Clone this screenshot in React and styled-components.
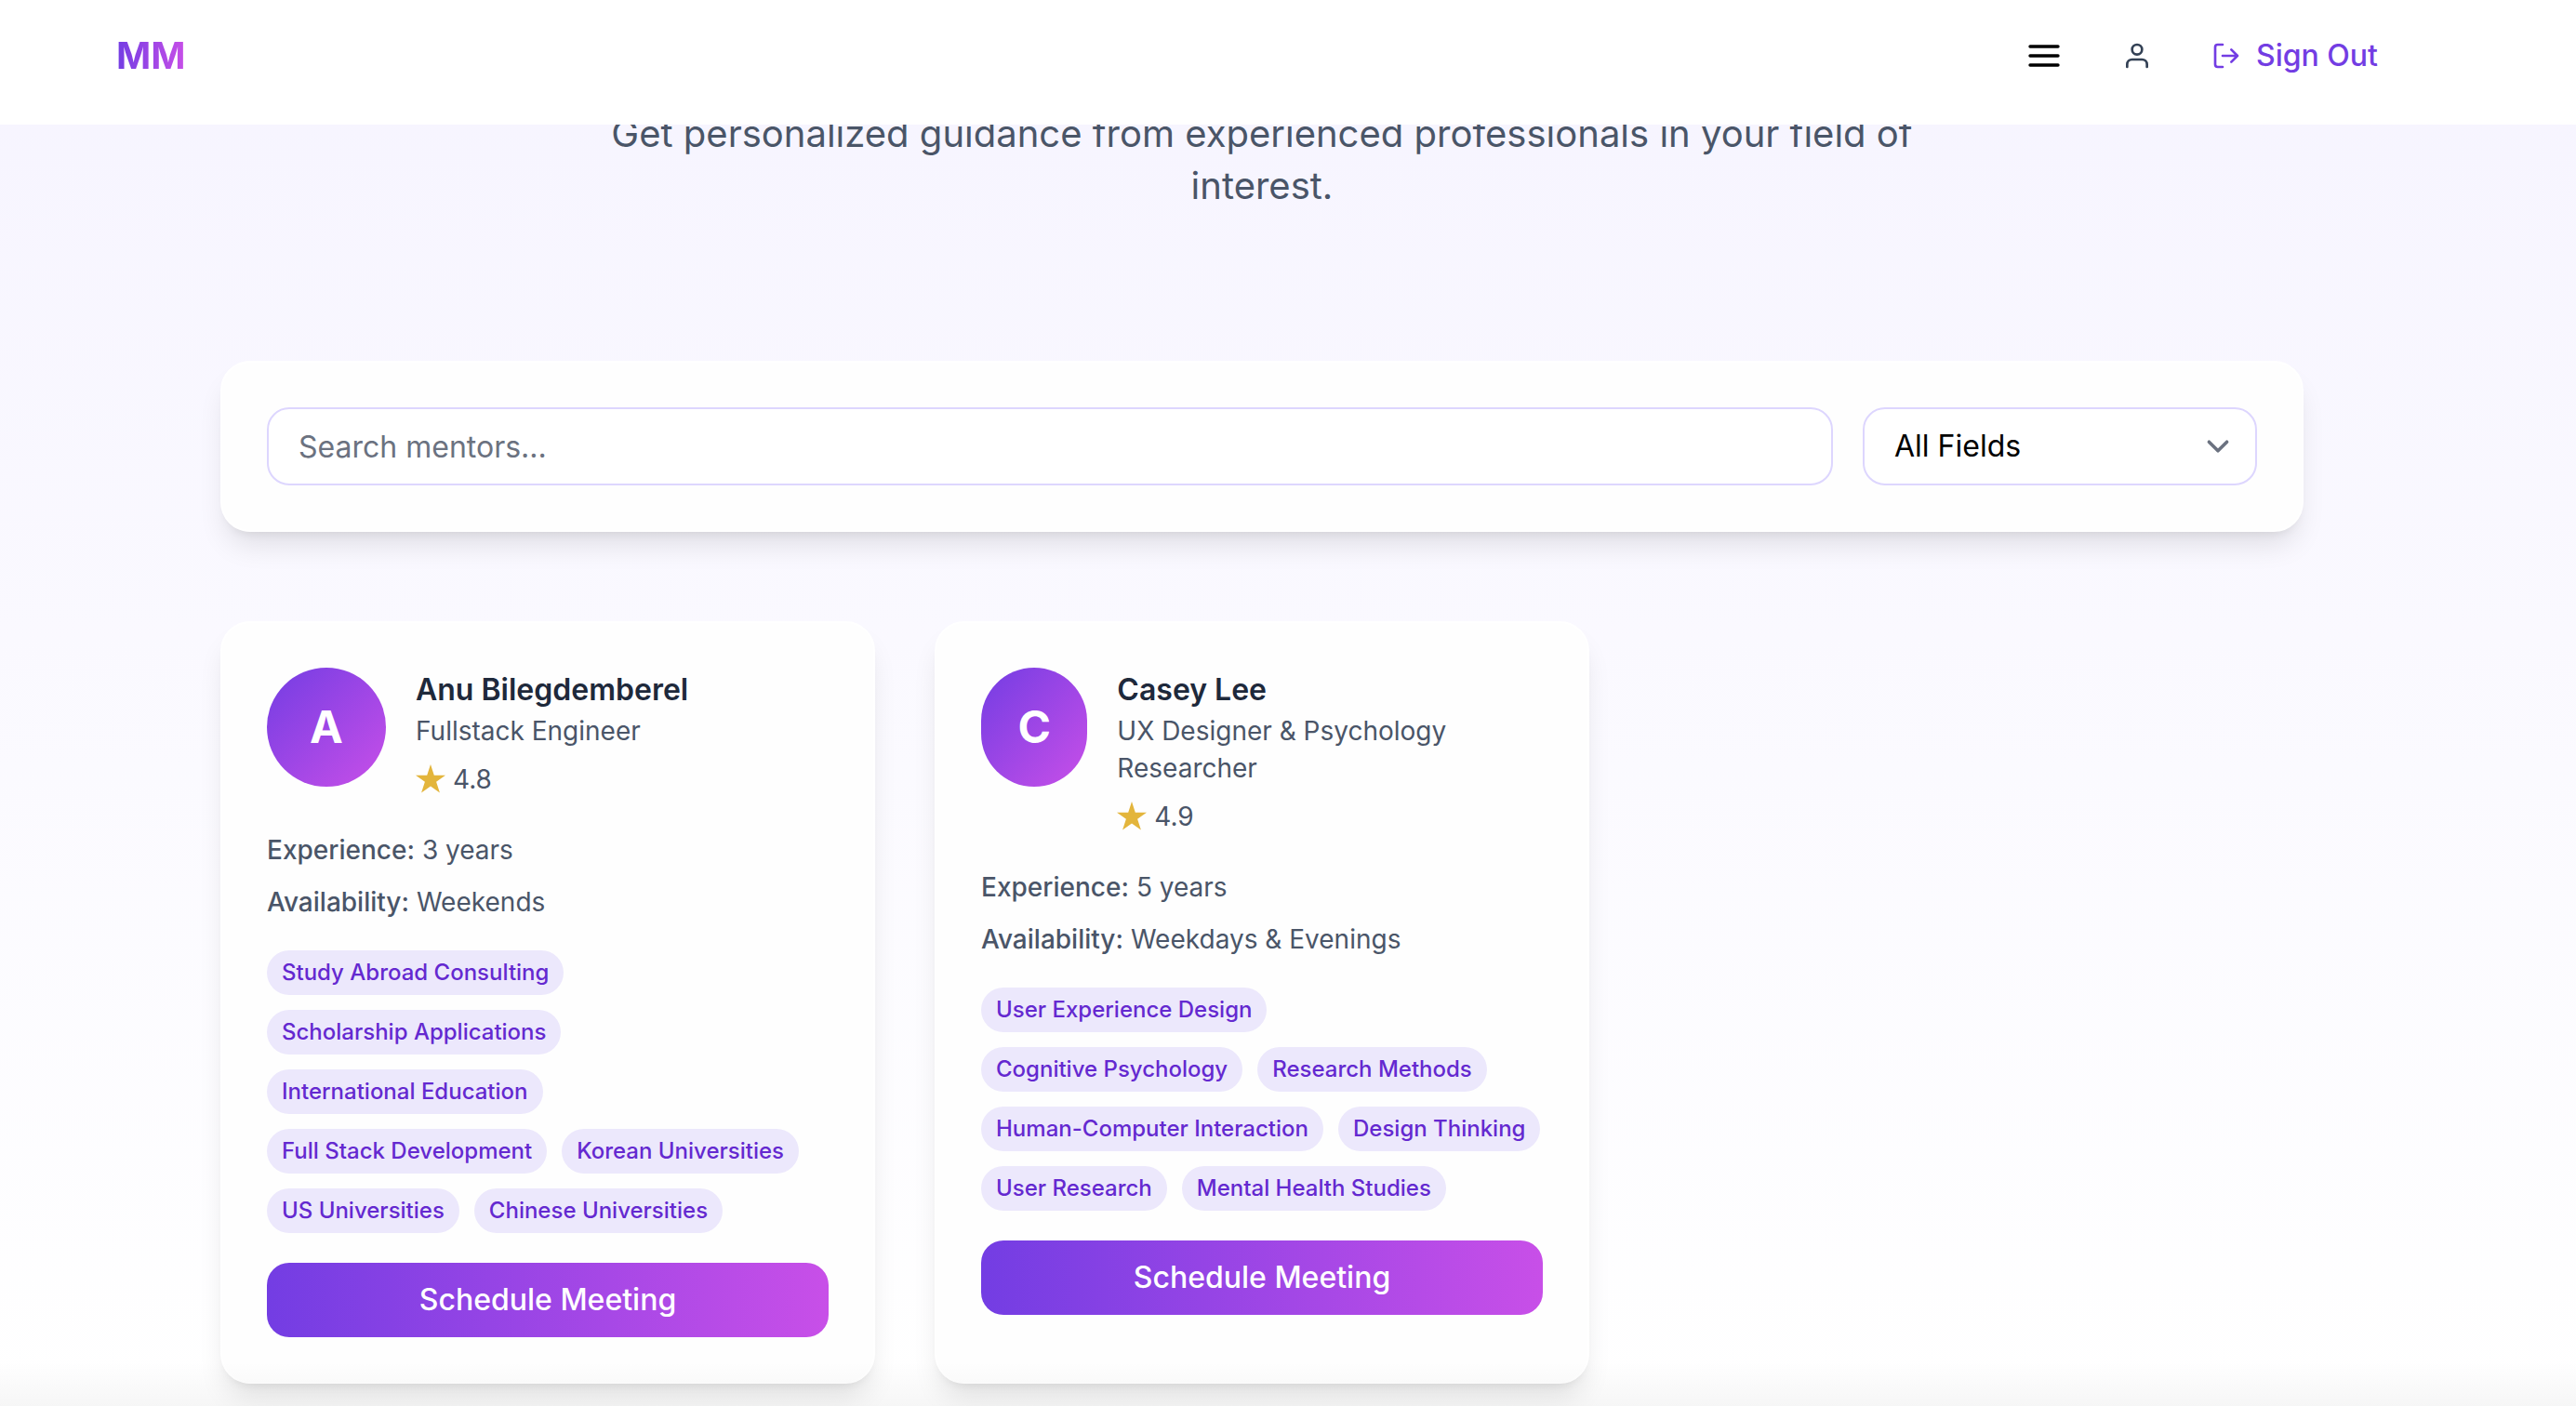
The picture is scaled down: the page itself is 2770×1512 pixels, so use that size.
import React from "react";
import styled, { createGlobalStyle } from "styled-components";

const GlobalStyle = createGlobalStyle`
  *, *::before, *::after { box-sizing: border-box; }
  html { height: 100%; overflow: hidden; }
  body {
    margin: 0;
    height: 100%;
    overflow: hidden;
    font-family: Inter, "Liberation Sans", sans-serif;
    font-size: 32px;
    line-height: 48px;
    color: #4a5568;
    background: #ffffff;
  }
  #root { height: 100%; }
  h3, p, ul, dl, dd { margin: 0; padding: 0; }
  button, input, select { font: inherit; }
`;

const brand = "#733de3, #c84fe8";

const Page = styled.div`
  position: relative;
  display: flex;
  flex-direction: column;
  height: 100%;
  overflow: hidden;
  background: linear-gradient(to bottom, #f6f4ff, #ffffff);

  /* soft shade rising from the lower edge of the window */
  &::after {
    content: "";
    position: absolute;
    inset: auto 0 0;
    height: 48px;
    background: linear-gradient(to bottom, rgba(0, 0, 0, 0), rgba(0, 0, 0, 0.035));
    pointer-events: none;
  }
`;

const Header = styled.header`
  flex: none;
  padding-right: 56px;
  background: #ffffff;
`;

const Nav = styled.nav`
  display: flex;
  align-items: center;
  justify-content: space-between;
  max-width: 2560px;
  height: 134px;
  margin: 0 auto;
  padding: 0 48px 14px;
`;

const Logo = styled.a`
  font-size: 40px;
  font-weight: 700;
  line-height: 56px;
  text-decoration: none;
  color: transparent;
  background: linear-gradient(to right, ${brand});
  background-clip: text;
  -webkit-background-clip: text;
`;

const NavActions = styled.div`
  display: flex;
  align-items: center;
  gap: 32px;
`;

const IconButton = styled.button`
  display: flex;
  padding: 16px;
  border: 0;
  background: none;
  color: ${(p) => p.$color};
`;

const SignOut = styled.button`
  display: flex;
  align-items: center;
  gap: 16px;
  padding: 16px 32px 16px 16px;
  border: 0;
  background: none;
  font-weight: 500;
  color: #733de3;
`;

const Main = styled.main`
  flex: 1;
  min-height: 0;
  overflow: hidden;
  padding-right: 56px;
`;

const Container = styled.div`
  max-width: 2304px;
  margin: 0 auto;
  padding: 0 32px;
`;

const Intro = styled.p`
  max-width: 1440px;
  margin: -18px auto 0;
  padding-bottom: 160px;
  font-size: 40px;
  line-height: 56px;
  text-align: center;
`;

const Panel = styled.div`
  padding: 48px;
  border: 2px solid #ffffff;
  border-radius: 32px;
  background: #fefefe;
  box-shadow: 0 20px 30px -6px rgba(0, 0, 0, 0.1), 0 8px 12px -8px rgba(0, 0, 0, 0.1);
`;

const SearchPanel = styled(Panel).attrs({ as: "form" })`
  display: flex;
  gap: 32px;
  margin-bottom: 96px;
`;

const SearchInput = styled.input`
  flex: 1;
  min-width: 0;
  height: 84px;
  padding: 16px 32px;
  border: 2px solid #ddd6fe;
  border-radius: 24px;
  background: #ffffff;
  color: #000000;
  &::placeholder { color: #6b7280; opacity: 1; }
`;

const SelectWrap = styled.div`
  position: relative;
  flex: 0 0 424px;
  svg {
    position: absolute;
    top: 18px;
    right: 18px;
    pointer-events: none;
  }
`;

const FieldSelect = styled.select`
  width: 100%;
  height: 84px;
  padding: 16px 80px 16px 32px;
  border: 2px solid #ddd6fe;
  border-radius: 24px;
  appearance: none;
  background: #ffffff;
  color: #000000;
`;

const MentorGrid = styled.div`
  display: grid;
  grid-template-columns: repeat(3, minmax(0, 1fr));
  gap: 64px;
`;

const Profile = styled.div`
  display: flex;
  align-items: flex-start;
  gap: 32px;
  margin-bottom: 32px;
`;

const Avatar = styled.div`
  display: flex;
  align-items: center;
  justify-content: center;
  width: 128px;
  height: 128px;
  border-radius: 999px;
  background: linear-gradient(to bottom right, ${brand});
  font-size: 48px;
  font-weight: 700;
  line-height: 64px;
  color: #ffffff;
`;

const Name = styled.h3`
  font-size: 32px;
  font-weight: 600;
  line-height: 48px;
  color: #1e293b;
`;

const Role = styled.p`
  font-size: 28px;
  line-height: 40px;
`;

const Rating = styled.div`
  display: flex;
  align-items: center;
  gap: 8px;
  margin-top: 8px;
  font-size: 28px;
  line-height: 48px;
`;

const Facts = styled.dl`
  display: grid;
  gap: 16px;
  margin-bottom: 32px;
  font-size: 28px;
  line-height: 40px;
`;

const Fact = styled.div`
  display: flex;
  gap: 8px;
  dt { font-weight: 500; }
`;

const Tags = styled.ul`
  display: flex;
  flex-wrap: wrap;
  gap: 16px;
  margin-bottom: 32px;
  list-style: none;
`;

const Tag = styled.li`
  padding: 8px 16px;
  border-radius: 24px;
  background: #ece8fc;
  font-size: 24px;
  font-weight: 500;
  line-height: 32px;
  color: #6429d0;
`;

const ScheduleButton = styled.button`
  width: 100%;
  padding: 16px 32px;
  border: 0;
  border-radius: 24px;
  background: linear-gradient(to right, ${brand});
  font-weight: 500;
  color: #ffffff;
`;

const MenuIcon = () => (
  <svg width="40" height="40" viewBox="0 0 40 40" fill="none" stroke="currentColor" strokeWidth="3.4" strokeLinecap="round">
    <path d="M5 10h30M5 20h30M5 30h30" />
  </svg>
);

const UserIcon = () => (
  <svg width="32" height="32" viewBox="0 0 24 24" fill="none" stroke="currentColor" strokeWidth="2" strokeLinecap="round" strokeLinejoin="round">
    <path d="M20 21v-2a4 4 0 0 0-4-4H8a4 4 0 0 0-4 4v2" />
    <circle cx="12" cy="7" r="4" />
  </svg>
);

const SignOutIcon = () => (
  <svg width="32" height="32" viewBox="0 0 24 24" fill="none" stroke="currentColor" strokeWidth="2" strokeLinecap="round" strokeLinejoin="round">
    <path d="M9 21H5a2 2 0 0 1-2-2V5a2 2 0 0 1 2-2h4M16 17l5-5-5-5M21 12H9" />
  </svg>
);

const ChevronIcon = () => (
  <svg width="48" height="48" viewBox="0 0 20 20" fill="none" stroke="#6b7280" strokeWidth="1.5" strokeLinecap="round" strokeLinejoin="round">
    <path d="M6 8l4 4 4-4" />
  </svg>
);

const StarIcon = () => (
  <svg width="32" height="32" viewBox="0 0 32 32" fill="#e3b53c">
    <path d="M16 0l3.8 11.7H32l-9.9 7.1 3.8 11.8L16 23.4l-9.9 7.2 3.8-11.8L0 11.7h12.2z" />
  </svg>
);

const mentors = [
  {
    name: "Anu Bilegdemberel",
    role: "Fullstack Engineer",
    rating: "4.8",
    experience: "3 years",
    availability: "Weekends",
    tags: [
      "Study Abroad Consulting",
      "Scholarship Applications",
      "International Education",
      "Full Stack Development",
      "Korean Universities",
      "US Universities",
      "Chinese Universities",
    ],
  },
  {
    name: "Casey Lee",
    role: "UX Designer & Psychology Researcher",
    rating: "4.9",
    experience: "5 years",
    availability: "Weekdays & Evenings",
    tags: [
      "User Experience Design",
      "Cognitive Psychology",
      "Research Methods",
      "Human-Computer Interaction",
      "Design Thinking",
      "User Research",
      "Mental Health Studies",
    ],
  },
];

const MentorCard = ({ mentor }) => (
  <Panel as="article">
    <Profile>
      <Avatar>{mentor.name[0]}</Avatar>
      <div>
        <Name>{mentor.name}</Name>
        <Role>{mentor.role}</Role>
        <Rating>
          <StarIcon />
          <span>{mentor.rating}</span>
        </Rating>
      </div>
    </Profile>
    <Facts>
      <Fact>
        <dt>Experience:</dt>
        <dd>{mentor.experience}</dd>
      </Fact>
      <Fact>
        <dt>Availability:</dt>
        <dd>{mentor.availability}</dd>
      </Fact>
    </Facts>
    <Tags>
      {mentor.tags.map((tag) => (
        <Tag key={tag}>{tag}</Tag>
      ))}
    </Tags>
    <ScheduleButton type="button">Schedule Meeting</ScheduleButton>
  </Panel>
);

export default function App() {
  return (
    <Page>
      <GlobalStyle />
      <Header>
        <Nav>
          <Logo href="#">MM</Logo>
          <NavActions>
            <IconButton type="button" aria-label="Menu" $color="#000000">
              <MenuIcon />
            </IconButton>
            <IconButton type="button" aria-label="Profile" $color="#334155">
              <UserIcon />
            </IconButton>
            <SignOut type="button">
              <SignOutIcon />
              Sign Out
            </SignOut>
          </NavActions>
        </Nav>
      </Header>
      <Main>
        <Container>
          <Intro>
            Get personalized guidance from experienced professionals in your field of interest.
          </Intro>
          <SearchPanel>
            <SearchInput type="text" aria-label="Search mentors" placeholder="Search mentors..." />
            <SelectWrap>
              <FieldSelect aria-label="Field" defaultValue="all">
                <option value="all">All Fields</option>
              </FieldSelect>
              <ChevronIcon />
            </SelectWrap>
          </SearchPanel>
          <MentorGrid>
            {mentors.map((mentor) => (
              <MentorCard key={mentor.name} mentor={mentor} />
            ))}
          </MentorGrid>
        </Container>
      </Main>
    </Page>
  );
}
